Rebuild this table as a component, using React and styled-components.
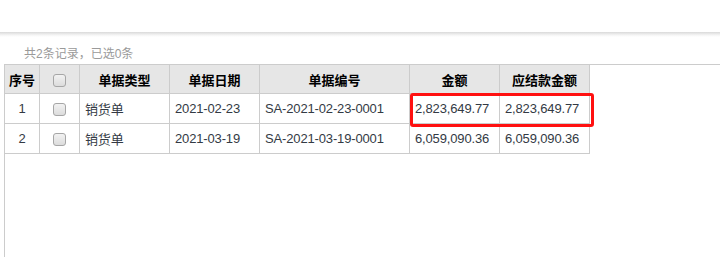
import React from "react";
import styled, { createGlobalStyle } from "styled-components";

const GlobalStyle = createGlobalStyle`
  html, body { margin: 0; padding: 0; background: #fff; }
  body { font-family: "Liberation Sans", Arial, "Noto Sans CJK SC", sans-serif; }
  #root { height: 257px; }
`;

const Page = styled.div`
  display: flex;
  flex-direction: column;
  height: 257px;
  overflow: hidden;
`;

const TopBar = styled.div`
  height: 32px;
  flex: none;
  background: #fff;
`;

const Shade = styled.div`
  height: 5px;
  flex: none;
  background: linear-gradient(#d9d9d9, #f4f4f4 60%, #fff);
`;

const Summary = styled.div`
  height: 27px;
  flex: none;
  box-sizing: border-box;
  padding: 7px 0 0 24px;
  line-height: 20px;
  font-size: 12px;
  color: #9a9a9a;
`;

const Panel = styled.div`
  position: relative;
  flex: 1;
  margin-left: 4px;
  border-top: 1px solid #cccccc;
  border-left: 1px solid #cccccc;
`;

const Grid = styled.table`
  border-collapse: separate;
  border-spacing: 0;
  table-layout: fixed;
  width: 585px;
  font-size: 13px;
  letter-spacing: -0.15px;
`;

const Th = styled.th`
  box-sizing: border-box;
  width: ${(p) => p.$w}px;
  height: 29px;
  padding: 0;
  background: #e6e6e6;
  border-right: 1px solid #cccccc;
  border-bottom: 1px solid #cccccc;
  color: #000;
  font-weight: bold;
  text-align: center;
  letter-spacing: 0;
`;

const Td = styled.td`
  box-sizing: border-box;
  height: 30px;
  padding: 0 5px;
  border-right: 1px solid #cccccc;
  border-bottom: 1px solid #cccccc;
  color: #333a44;
  text-align: ${(p) => (p.$center ? "center" : "left")};
  white-space: nowrap;
`;

const Check = styled.span`
  display: inline-block;
  vertical-align: middle;
  box-sizing: border-box;
  width: 13px;
  height: 13px;
  border: 1px solid #a6a6a6;
  border-radius: 3px;
  background: linear-gradient(#f2f2f2, #dcdcdc);
`;

const Highlight = styled.div`
  position: absolute;
  left: 405px;
  top: 28px;
  width: 184px;
  height: 34px;
  box-sizing: border-box;
  border: 3px solid #ff1010;
  border-radius: 3px;
  pointer-events: none;
`;

const columns = [
  { key: "no", title: "序号", w: 35 },
  { key: "check", title: "", w: 40 },
  { key: "type", title: "单据类型", w: 90 },
  { key: "date", title: "单据日期", w: 90 },
  { key: "code", title: "单据编号", w: 150 },
  { key: "amount", title: "金额", w: 90 },
  { key: "due", title: "应结款金额", w: 90 },
];

const rows = [
  { no: 1, type: "销货单", date: "2021-02-23", code: "SA-2021-02-23-0001", amount: "2,823,649.77", due: "2,823,649.77" },
  { no: 2, type: "销货单", date: "2021-03-19", code: "SA-2021-03-19-0001", amount: "6,059,090.36", due: "6,059,090.36" },
];

export default function App() {
  return (
    <>
      <GlobalStyle />
      <Page>
        <TopBar />
        <Shade />
        <Summary>共2条记录，已选0条</Summary>
        <Panel>
          <Grid>
            <thead>
              <tr>
                {columns.map((c) => (
                  <Th key={c.key} $w={c.w}>
                    {c.key === "check" ? <Check /> : c.title}
                  </Th>
                ))}
              </tr>
            </thead>
            <tbody>
              {rows.map((r) => (
                <tr key={r.no}>
                  <Td $center>{r.no}</Td>
                  <Td $center><Check /></Td>
                  <Td>{r.type}</Td>
                  <Td>{r.date}</Td>
                  <Td>{r.code}</Td>
                  <Td>{r.amount}</Td>
                  <Td>{r.due}</Td>
                </tr>
              ))}
            </tbody>
          </Grid>
          <Highlight />
        </Panel>
      </Page>
    </>
  );
}
